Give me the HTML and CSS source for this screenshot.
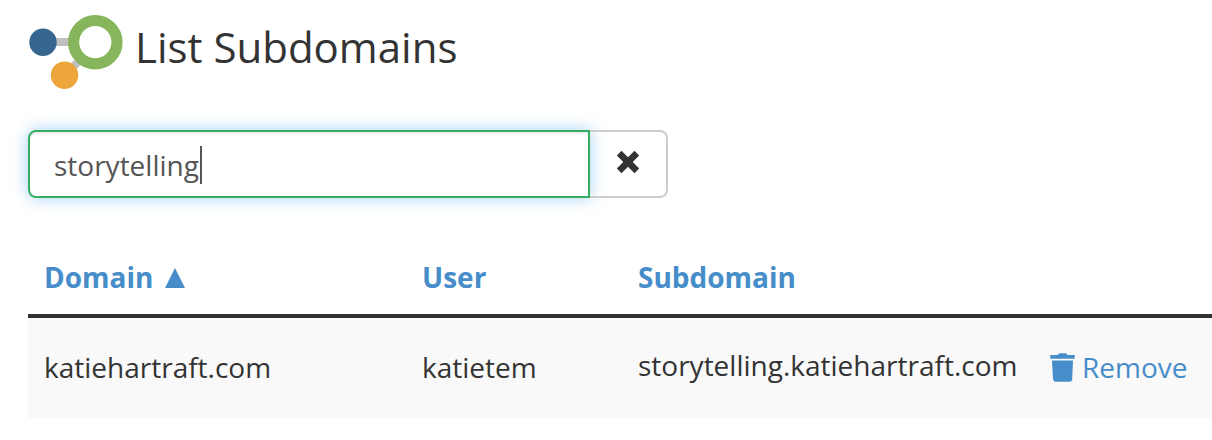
FILE: index.html
```html
<!DOCTYPE html>
<html lang="en">
<head>
<meta charset="utf-8">
<title>List Subdomains</title>
<link rel="stylesheet" href="styles.css">
</head>
<body>
<main class="page">
  <header class="page-header">
    <svg class="logo" width="96" height="80" viewBox="28 12 96 80" aria-hidden="true">
      <path d="M43 42H80M64.500 75.300L84 56" stroke="#bfbfbf" stroke-width="8" fill="none"/>
      <circle cx="43" cy="42.300" r="13.700" fill="#36658f"/>
      <circle cx="64.500" cy="75.300" r="13.700" fill="#eda63c"/>
      <circle cx="95.300" cy="42.200" r="21.700" fill="#fff" stroke="#87b55b" stroke-width="11.200"/>
    </svg>
    <h1 class="title">List Subdomains</h1>
  </header>
  <div class="search">
    <div class="search-field" role="textbox"><span>storytelling</span><i class="caret"></i></div>
    <button class="search-clear" aria-label="Clear">
      <svg width="24" height="24" viewBox="0 0 24 24"><path d="M5.500 0.800L12 7.300L18.500 0.800L23.200 5.500L16.700 12L23.200 18.500L18.500 23.200L12 16.700L5.500 23.200L0.800 18.500L7.300 12L0.800 5.500Z" fill="#333"/></svg>
    </button>
  </div>
  <div class="table">
    <div class="row head">
      <a class="cell">Domain <svg class="sort" width="20" height="20" viewBox="0 0 20 20"><path d="M10 0L20 20H0Z" fill="#468dc9"/></svg></a>
      <a class="cell">User</a>
      <a class="cell">Subdomain</a>
    </div>
    <div class="row body">
      <span class="cell">katiehartraft.com</span>
      <span class="cell">katietem</span>
      <span class="cell subdomain">storytelling.katiehartraft.com</span>
      <a class="remove">
        <svg width="25" height="29" viewBox="0 0 25 29"><path d="M0.300 2H7.800Q8.300 0.300 10 0.300H15.500Q17 0.300 17.500 2H24.700V5.800H0.300ZM2 7.600H23L22.200 26Q22 28.700 19.500 28.700H5.500Q3.200 28.700 3 26Z" fill="#468dc9"/></svg>
        <span>Remove</span>
      </a>
    </div>
  </div>
</main>
</body>
</html>
```
FILE: styles.css
```css
* { box-sizing: border-box; }

body {
  margin: 0;
  overflow: hidden;
  background: #fff;
  color: #333;
  font: 28px/40px "Open Sans", sans-serif;
}

.page { padding: 12px 0 0 28px; }

.page-header {
  display: flex;
  height: 80px;
}

.title {
  margin: 5px 0 0 11px;
  font-size: 42px;
  line-height: 60px;
  font-weight: 400;
  white-space: nowrap;
}

.search {
  display: flex;
  width: 640px;
  height: 68px;
  margin-top: 38px;
}

.search-field {
  display: flex;
  align-items: center;
  width: 562px;
  padding: 2px 24px 0;
  border: 2px solid #33ad62;
  border-radius: 8px 0 0 8px;
  color: #555;
  box-shadow: inset 0 2px 2px rgba(0, 0, 0, .075), 0 0 16px rgba(102, 175, 233, .6);
}

.caret {
  width: 2px;
  height: 38px;
  margin-left: 1px;
  background: #555;
}

.search-clear {
  flex: 1;
  display: flex;
  align-items: center;
  justify-content: center;
  padding: 0 0 4px;
  border: 2px solid #ccc;
  border-left: 0;
  border-radius: 0 8px 8px 0;
  background: transparent;
}

.table { margin-top: 42px; }

.row {
  display: grid;
  grid-template-columns: 378px 216px 412px 1fr;
  padding-left: 16px;
  white-space: nowrap;
}

.head {
  height: 78px;
  padding-top: 17px;
  border-bottom: 4px solid #333;
  color: #468dc9;
  font-weight: 700;
}

.sort { margin-left: 4px; }

.body {
  height: 100px;
  padding-top: 29px;
  background: #f9f9f9;
}

.subdomain { margin-top: -2px; }

.remove {
  display: flex;
  align-items: center;
  gap: 7px;
  height: 40px;
  color: #468dc9;
}
```
